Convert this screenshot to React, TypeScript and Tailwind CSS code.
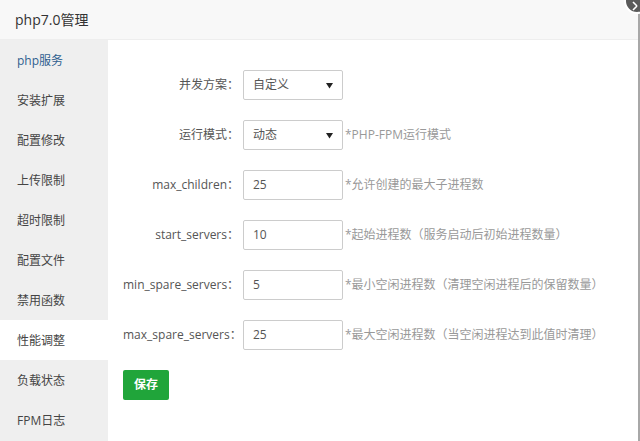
import React from "react";

const menu = ["php服务", "安装扩展", "配置修改", "上传限制", "超时限制", "配置文件", "禁用函数", "性能调整", "负载状态", "FPM日志"];

const rows: { label: string; value: string; select?: boolean; hint?: string }[] = [
  { label: "并发方案：", value: "自定义", select: true },
  { label: "运行模式：", value: "动态", select: true, hint: "*PHP-FPM运行模式" },
  { label: "max_children：", value: "25", hint: "*允许创建的最大子进程数" },
  { label: "start_servers：", value: "10", hint: "*起始进程数（服务启动后初始进程数量）" },
  { label: "min_spare_servers：", value: "5", hint: "*最小空闲进程数（清理空闲进程后的保留数量）" },
  { label: "max_spare_servers：", value: "25", hint: "*最大空闲进程数（当空闲进程达到此值时清理）" },
];

function Caret() {
  return (
    <svg width="7" height="7" viewBox="0 0 7 7" className="shrink-0">
      <path d="M0 1h7L3.5 6.5z" fill="#222" />
    </svg>
  );
}

export default function App() {
  return (
    <div
      className="relative w-[640px] h-[441px] overflow-hidden bg-white text-[#333]"
      style={{ fontFamily: '"Open Sans", "Noto Sans CJK SC", sans-serif' }}
    >
      {/* close button peeking from corner */}
      <div className="absolute -right-[10px] -top-[12px] w-[26px] h-[26px] rounded-full bg-[#5a5a5a] border-2 border-white z-10">
        <svg width="26" height="26" viewBox="0 0 26 26" className="absolute -left-[2px] -top-[2px]">
          <path d="M9 14l4 4M13 18l0 0M9 22l4-4" stroke="#fff" strokeWidth="1.6" fill="none" />
        </svg>
      </div>

      <div className="flex flex-col h-full border-r-2 border-[#a8a8a8]">
        <div className="h-[40px] shrink-0 bg-[#f8f8f8] border-b border-[#eee] flex items-center pl-[15px] text-[14px]">
          php7.0管理
        </div>
        <div className="flex flex-1 min-h-0">
          <div className="w-[108px] shrink-0 bg-[#efefef] flex flex-col">
            {menu.map((m) => (
              <div
                key={m}
                className={`h-[40px] shrink-0 flex items-center pl-[17px] pt-[1px] text-[12px] ${
                  m === "php服务" ? "text-[#2f5f8f]" : m === "性能调整" ? "bg-white text-[#444]" : "text-[#444]"
                }`}
              >
                {m}
              </div>
            ))}
          </div>
          <div className="flex-1 pt-[30px] pl-[15px] flex flex-col gap-[20px]">
            {rows.map((r) => (
              <div key={r.label} className="flex items-center h-[30px]">
                <div className="w-[120px] text-right text-[12px] text-[#555] pr-[4px]">{r.label}</div>
                <div className="w-[100px] h-[30px] border border-[#ccc] rounded-[2px] flex items-center justify-between pl-[9px] pr-[9px] text-[12px] text-[#555]">
                  <span>{r.value}</span>
                  {r.select && <Caret />}
                </div>
                {r.hint && <span className="ml-[2px] text-[12px] text-[#999]">{r.hint}</span>}
              </div>
            ))}
            <div>
              <button className="w-[46px] h-[30px] rounded-[2px] bg-[#20a53a] text-white text-[12px] font-bold">保存</button>
            </div>
          </div>
        </div>
      </div>
    </div>
  );
}
